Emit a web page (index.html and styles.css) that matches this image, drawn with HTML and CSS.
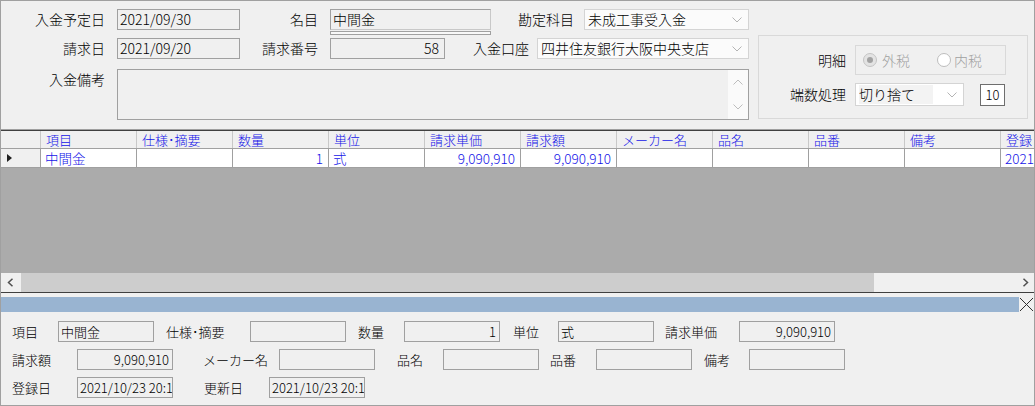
FILE: index.html
```html
<!DOCTYPE html>
<html lang="ja">
<head>
<meta charset="utf-8">
<title>入金</title>
<link rel="stylesheet" href="styles.css">
</head>
<body>
<div class="window">
  <section class="top">
    <div class="top-left">
      <div class="row">
        <span class="lbl lt1">入金予定日</span>
        <div class="field fdate">2021/09/30</div>
        <span class="lbl lt2">名目</span>
        <div class="namefield">
          <div class="field fname">中間金</div>
          <div class="underbar"></div>
        </div>
        <span class="lbl lt3">勘定科目</span>
        <div class="select s1"><span class="sel-text">未成工事受入金</span><svg class="chev" width="10" height="6" viewBox="0 0 10 6"><polyline points="0.5,0.5 5,5 9.5,0.5" fill="none" stroke="#b4b4b4" stroke-width="1"/></svg></div>
      </div>
      <div class="row">
        <span class="lbl lt1">請求日</span>
        <div class="field fdate">2021/09/20</div>
        <span class="lbl lt2">請求番号</span>
        <div class="field fnum num">58</div>
        <span class="lbl lt4">入金口座</span>
        <div class="select s2"><span class="sel-text">四井住友銀行大阪中央支店</span><svg class="chev" width="10" height="6" viewBox="0 0 10 6"><polyline points="0.5,0.5 5,5 9.5,0.5" fill="none" stroke="#b4b4b4" stroke-width="1"/></svg></div>
      </div>
      <div class="row memo">
        <span class="lbl lt1 lbl-top">入金備考</span>
        <div class="memo-box">
          <div class="memo-text"></div>
          <div class="memo-scroll">
            <svg width="10" height="6" viewBox="0 0 10 6"><polyline points="0.5,5.5 5,1 9.5,5.5" fill="none" stroke="#bdbdbd" stroke-width="1"/></svg>
            <svg width="10" height="6" viewBox="0 0 10 6"><polyline points="0.5,0.5 5,5 9.5,0.5" fill="none" stroke="#bdbdbd" stroke-width="1"/></svg>
          </div>
        </div>
      </div>
    </div>
    <div class="groupbox">
      <div class="gb-row">
        <span class="lbl gl">明細</span>
        <div class="radiobox">
          <span class="radio checked"><span class="dot"></span></span><span class="rtext">外税</span>
          <span class="radio r2"></span><span class="rtext rt2">内税</span>
        </div>
      </div>
      <div class="gb-row gb-row2">
        <span class="lbl gl">端数処理</span>
        <div class="select s3"><span class="sel-text">切り捨て</span><svg class="chev" width="10" height="6" viewBox="0 0 10 6"><polyline points="0.5,0.5 5,5 9.5,0.5" fill="none" stroke="#b4b4b4" stroke-width="1"/></svg></div>
        <div class="tenbox">10</div>
      </div>
    </div>
  </section>

  <section class="grid">
    <div class="ghead">
      <div class="gh first"></div>
      <div class="gh">項目</div>
      <div class="gh">仕様･摘要</div>
      <div class="gh">数量</div>
      <div class="gh">単位</div>
      <div class="gh">請求単価</div>
      <div class="gh">請求額</div>
      <div class="gh">メーカー名</div>
      <div class="gh">品名</div>
      <div class="gh">品番</div>
      <div class="gh">備考</div>
      <div class="gh">登録日</div>
    </div>
    <div class="grow">
      <div class="gd rowhead"><span class="tri"></span></div>
      <div class="gd">中間金</div>
      <div class="gd"></div>
      <div class="gd num">1</div>
      <div class="gd">式</div>
      <div class="gd num">9,090,910</div>
      <div class="gd num">9,090,910</div>
      <div class="gd"></div>
      <div class="gd"></div>
      <div class="gd"></div>
      <div class="gd"></div>
      <div class="gd">2021/10/23</div>
    </div>
    <div class="gray"></div>
    <div class="hscroll">
      <div class="sb-btn sb-left"><svg width="7" height="9" viewBox="0 0 7 9"><polyline points="5.5,0.8 1.5,4.5 5.5,8.2" fill="none" stroke="#505050" stroke-width="1.5"/></svg></div>
      <div class="sb-thumb"></div>
      <div class="sb-track"></div>
      <div class="sb-btn sb-right"><svg width="7" height="9" viewBox="0 0 7 9"><polyline points="1.5,0.8 5.5,4.5 1.5,8.2" fill="none" stroke="#505050" stroke-width="1.5"/></svg></div>
    </div>
  </section>

  <div class="titlebar">
    <div class="bar"></div>
    <div class="close"><svg width="15" height="15" viewBox="0 0 15 15"><line x1="1" y1="1" x2="14" y2="14" stroke="#303030" stroke-width="1"/><line x1="14" y1="1" x2="1" y2="14" stroke="#303030" stroke-width="1"/></svg></div>
  </div>

  <section class="detail">
    <div class="drow">
      <span class="dl b1">項目</span>
      <div class="dfield">中間金</div>
      <span class="dl b2">仕様･摘要</span>
      <div class="dfield"></div>
      <span class="dl b3">数量</span>
      <div class="dfield num">1</div>
      <span class="dl b4">単位</span>
      <div class="dfield">式</div>
      <span class="dl b5">請求単価</span>
      <div class="dfield num">9,090,910</div>
    </div>
    <div class="drow">
      <span class="dl c1">請求額</span>
      <div class="dfield num">9,090,910</div>
      <span class="dl c2">メーカー名</span>
      <div class="dfield"></div>
      <span class="dl c3">品名</span>
      <div class="dfield"></div>
      <span class="dl c4">品番</span>
      <div class="dfield"></div>
      <span class="dl c5">備考</span>
      <div class="dfield"></div>
    </div>
    <div class="drow">
      <span class="dl c1">登録日</span>
      <div class="dfield">2021/10/23 20:14:35</div>
      <span class="dl e2">更新日</span>
      <div class="dfield">2021/10/23 20:14:35</div>
    </div>
  </section>
</div>
</body>
</html>
```

FILE: styles.css
```css
* { box-sizing: border-box; }
html, body { margin: 0; padding: 0; }
body {
  background: #f0f0f0;
  font-family: "Noto Sans CJK JP", "Noto Sans", sans-serif;
  font-size: 14px;
  font-weight: 300;
  color: #000;
}
.window {
  width: 1035px;
  height: 406px;
  border: 1px solid #a0a0a0;
  background: #f0f0f0;
  display: flex;
  flex-direction: column;
  overflow: hidden;
}

/* ---------- top panel ---------- */
.top {
  height: 128px;
  flex: none;
  display: flex;
  align-items: flex-start;
  padding-top: 8px;
}
.top-left {
  width: 748px;
  flex: none;
  display: flex;
  flex-direction: column;
}
.row {
  display: flex;
  align-items: flex-start;
  height: 21px;
}
.row + .row { margin-top: 8px; }
.row.memo { margin-top: 10px; height: 51px; }

.lbl {
  flex: none;
  height: 21px;
  line-height: 21px;
  text-align: right;
  white-space: nowrap;
}
.lbl-top { line-height: 20px; }
.lt1 { width: 104px; margin-right: 12px; }
.lt2 { width: 78px; margin-right: 12px; }
.lt3 { width: 83px; margin-right: 10px; }
.lt4 { width: 84px; margin-right: 8px; }

.field {
  flex: none;
  height: 21px;
  border: 1px solid #a0a0a0;
  background: #f0f0f0;
  line-height: 19px;
  padding: 0 2px;
  white-space: nowrap;
  overflow: hidden;
}
.num { text-align: right; }
.fdate { width: 123px; }
.fnum { width: 115px; padding-right: 5px; }
.namefield { flex: none; display: flex; flex-direction: column; }
.fname { width: 161px; border-color: #a0a0a0 #c8c8c8 #c8c8c8 #a0a0a0; }
.underbar {
  width: 161px;
  height: 4px;
  margin-top: 1px;
  border: 1px solid #a0a0a0;
  background: #f8f8f8;
}

.select {
  flex: none;
  height: 21px;
  border: 1px solid #d4d4d4;
  background: #fbfbfb;
  display: flex;
  align-items: center;
  padding-left: 3px;
  padding-right: 6px;
}
.sel-text { flex: 1; line-height: 19px; white-space: nowrap; overflow: hidden; }
.chev { flex: none; }
.s1 { width: 165px; }
.s2 { width: 212px; }

.memo-box {
  flex: none;
  width: 632px;
  height: 51px;
  border: 1px solid #a0a0a0;
  background: #f0f0f0;
  display: flex;
}
.memo-text { flex: 1; }
.memo-scroll {
  width: 20px;
  background: #fafafa;
  display: flex;
  flex-direction: column;
  justify-content: space-between;
  align-items: center;
  padding: 9px 0 9px 0;
}

/* ---------- group box ---------- */
.groupbox {
  flex: none;
  width: 270px;
  height: 84px;
  margin-left: 9px;
  margin-top: 26px;
  border: 1px solid #d9d9d9;
  padding-top: 9px;
  display: flex;
  flex-direction: column;
}
.gb-row { display: flex; align-items: center; height: 30px; }
.gb-row2 { margin-top: 8px; height: 23px; }
.gl { width: 87px; margin-right: 9px; }
.radiobox {
  flex: none;
  width: 151px;
  height: 30px;
  border: 1px solid #d9d9d9;
  display: flex;
  align-items: center;
  padding-left: 7px;
}
.radio {
  flex: none;
  width: 14px;
  height: 14px;
  border-radius: 50%;
  border: 1px solid #bdbdbd;
  background: #fff;
  display: flex;
  align-items: center;
  justify-content: center;
}
.radio.checked { background: #e3e3e3; border-color: #c4c4c4; }
.dot { width: 6px; height: 6px; border-radius: 50%; background: #a2a2a2; }
.rtext { color: #a0a0a0; margin-left: 5px; line-height: 20px; }
.r2 { margin-left: 27px; }
.rt2 { margin-left: 3px; }
.s3 { width: 109px; height: 23px; border-color: #d4d4d4; background: #fff; }
.s3 .sel-text { background: #f3f3f3; margin-right: 14px; }
.tenbox {
  flex: none;
  margin-left: 16px;
  width: 25px;
  height: 22px;
  border: 1px solid #6e6e6e;
  background: #fff;
  text-align: center;
  line-height: 20px;
  font-size: 13px;
}

/* ---------- grid ---------- */
.grid { flex: none; border-top: 1px solid #a0a0a0; }
.ghead, .grow {
  display: grid;
  grid-template-columns: 39px repeat(10, 96px) 1fr;
  font-size: 13px;
  color: #1414e8;
}
.ghead {
  height: 19px;
  border-top: 1px solid #404040;
  border-bottom: 1px solid #a0a0a0;
  background: #f0f0f0;
}
.gh {
  border-left: 1px solid #c8c8c8;
  padding-left: 5px;
  line-height: 17px;
  white-space: nowrap;
  overflow: hidden;
}
.gh.first { border-left: none; }
.grow { height: 19px; border-bottom: 1px solid #a0a0a0; }
.gd {
  background: #fff;
  border-left: 1px solid #a0a0a0;
  padding: 0 5px 0 4px;
  line-height: 18px;
  white-space: nowrap;
  overflow: hidden;
  font-size: 13.5px;
}
.gd.rowhead {
  background: #f0f0f0;
  border-left: none;
  display: flex;
  align-items: center;
  padding-left: 6px;
}
.tri {
  width: 0;
  height: 0;
  border-top: 4px solid transparent;
  border-bottom: 4px solid transparent;
  border-left: 5px solid #202020;
}
.gray { height: 105px; background: #ababab; }
.hscroll {
  height: 20px;
  display: flex;
  background: #f0f0f0;
  border-bottom: 1px solid #404040;
}
.sb-btn { flex: none; display: flex; align-items: center; justify-content: center; }
.sb-left { width: 20px; padding-right: 2px; }
.sb-right { width: 17px; }
.sb-thumb { flex: none; width: 853px; background: #cdcdcd; }
.sb-track { flex: 1; }

/* ---------- title bar ---------- */
.titlebar {
  flex: none;
  height: 15px;
  margin-top: 4px;
  display: flex;
}
.bar { flex: 1; background: #99b4d1; }
.close { flex: none; width: 15px; display: flex; align-items: center; justify-content: center; }

/* ---------- detail panel ---------- */
.detail {
  flex: 1;
  padding-top: 9px;
  display: flex;
  flex-direction: column;
}
.drow { display: flex; align-items: center; height: 21px; }
.drow + .drow { margin-top: 7px; }
.dl {
  flex: none;
  font-size: 13px;
  line-height: 21px;
  white-space: nowrap;
}
.dfield {
  flex: none;
  width: 96px;
  height: 21px;
  border: 1px solid #a0a0a0;
  background: #f0f0f0;
  font-size: 13px;
  line-height: 19px;
  padding: 0 2px;
  white-space: nowrap;
  overflow: hidden;
}
.dfield.num { padding-right: 3px; }
.b1 { width: 57px; padding-left: 11px; }
.b2 { width: 96px; padding-left: 12px; }
.b3 { width: 58px; padding-left: 12px; }
.b4 { width: 58px; padding-left: 13px; }
.b5 { width: 85px; padding-left: 11px; }
.c1 { width: 76px; padding-left: 11px; }
.c2 { width: 106px; padding-left: 30px; }
.c3 { width: 68px; padding-left: 22px; }
.c4 { width: 57px; padding-left: 11px; }
.c5 { width: 57px; padding-left: 12px; }
.e2 { width: 96px; padding-left: 31px; }
```
